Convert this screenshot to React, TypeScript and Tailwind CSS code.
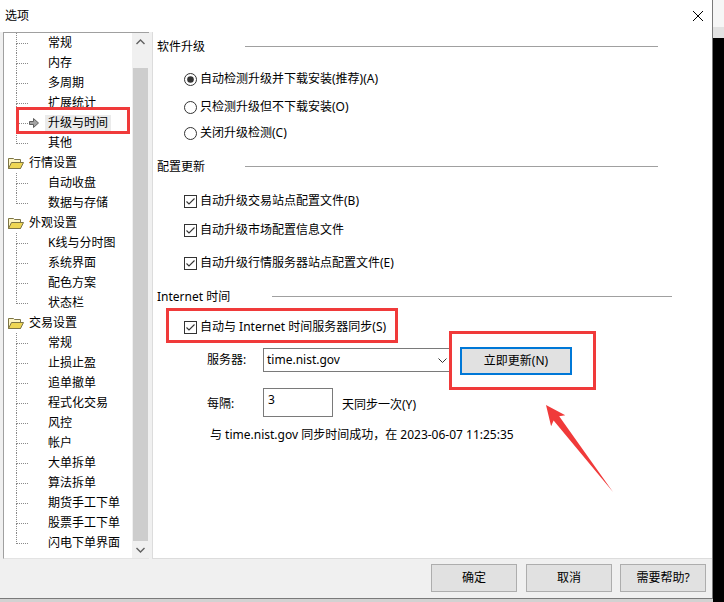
import React from "react";

const LINE = "border-[#8a8a8a]";

function Folder() {
  return (
    <svg width="16" height="13" viewBox="0 0 16 13">
      <path d="M0.5 1.5 L5.5 1.5 L6.5 2.5 L12.5 2.5 L12.5 11.5 L0.5 11.5 Z" fill="#fdf5c4" stroke="#7d7546" />
      <path d="M0.5 11.5 L3.5 5.5 L15.5 5.5 L12.5 11.5 Z" fill="#eed654" stroke="#7d7546" />
    </svg>
  );
}

function SelArrow() {
  return (
    <svg width="10" height="10" viewBox="0 0 10 10">
      <polygon points="0.5,3.5 4.5,3.5 4.5,0.5 9.5,5 4.5,9.5 4.5,6.5 0.5,6.5" fill="#a3a3a3" stroke="#5f5f5f" strokeWidth="1" />
    </svg>
  );
}

type Row =
  | { kind: "parent"; label: string }
  | { kind: "child"; label: string; last?: boolean; selected?: boolean };

const rows: Row[] = [
  { kind: "child", label: "常规" },
  { kind: "child", label: "内存" },
  { kind: "child", label: "多周期" },
  { kind: "child", label: "扩展统计" },
  { kind: "child", label: "升级与时间", selected: true },
  { kind: "child", label: "其他", last: true },
  { kind: "parent", label: "行情设置" },
  { kind: "child", label: "自动收盘" },
  { kind: "child", label: "数据与存储", last: true },
  { kind: "parent", label: "外观设置" },
  { kind: "child", label: "K线与分时图" },
  { kind: "child", label: "系统界面" },
  { kind: "child", label: "配色方案" },
  { kind: "child", label: "状态栏", last: true },
  { kind: "parent", label: "交易设置" },
  { kind: "child", label: "常规" },
  { kind: "child", label: "止损止盈" },
  { kind: "child", label: "追单撤单" },
  { kind: "child", label: "程式化交易" },
  { kind: "child", label: "风控" },
  { kind: "child", label: "帐户" },
  { kind: "child", label: "大单拆单" },
  { kind: "child", label: "算法拆单" },
  { kind: "child", label: "期货手工下单" },
  { kind: "child", label: "股票手工下单" },
  { kind: "child", label: "闪电下单界面", last: true },
];

function TreeRow({ row }: { row: Row }) {
  if (row.kind === "parent") {
    return (
      <div className="flex h-[20px] items-center">
        <div className="ml-[4px] flex w-[16px] items-center">
          <Folder />
        </div>
        <span className="ml-[5px] leading-[16px] whitespace-nowrap">{row.label}</span>
      </div>
    );
  }
  return (
    <div className="flex h-[20px] items-center">
      <div className="ml-[12px] flex h-full w-[12px] flex-col">
        <div className={`h-[11px] border-l border-b border-dotted ${LINE}`} />
        <div className={row.last ? "h-[9px]" : `h-[9px] border-l border-dotted ${LINE}`} />
      </div>
      <div className="flex w-[17px] items-center pl-[1px]">{row.selected ? <SelArrow /> : null}</div>
      <span className={`px-[3px] leading-[16px] whitespace-nowrap ${row.selected ? "bg-[#ebebeb]" : ""}`}>
        {row.label}
      </span>
    </div>
  );
}

function Chevron({ up }: { up?: boolean }) {
  return (
    <svg width="9" height="6" viewBox="0 0 9 6">
      <polyline
        points={up ? "0.5,5 4.5,1 8.5,5" : "0.5,1 4.5,5 8.5,1"}
        fill="none"
        stroke="#606060"
        strokeWidth="1.4"
      />
    </svg>
  );
}

function Header({ label, labelW, lineW, mt }: { label: string; labelW: string; lineW: string; mt: string }) {
  return (
    <div className={`flex h-[20px] items-start pl-[4px] ${mt}`}>
      <span className={`${labelW} h-[20px] flex items-center leading-[16px] whitespace-nowrap`}>{label}</span>
      <div className={`${lineW} mt-[9px] h-px bg-[#a0a0a0]`} />
    </div>
  );
}

function Radio({ checked }: { checked?: boolean }) {
  return (
    <svg width="13" height="13" viewBox="0 0 13 13">
      <circle cx="6.5" cy="6.5" r="6" fill="#fff" stroke="#333" strokeWidth="1" />
      {checked ? <circle cx="6.5" cy="6.5" r="3.3" fill="#333" /> : null}
    </svg>
  );
}

function Check() {
  return (
    <svg width="13" height="13" viewBox="0 0 13 13">
      <rect x="0.5" y="0.5" width="12" height="12" fill="#fff" stroke="#333" strokeWidth="1" />
      <polyline points="2.5,6.5 5,9 10.5,3.5" fill="none" stroke="#333" strokeWidth="1.1" />
    </svg>
  );
}

function OptRow({ mt, children, radio, checked }: { mt: string; children: React.ReactNode; radio?: boolean; checked?: boolean }) {
  return (
    <div className={`flex h-[20px] items-center pl-[31px] ${mt}`}>
      {radio ? <Radio checked={checked} /> : <Check />}
      <span className="ml-[3px] leading-[16px] whitespace-nowrap">{children}</span>
    </div>
  );
}

function DlgButton({ children, className = "" }: { children: React.ReactNode; className?: string }) {
  return (
    <div className={`flex h-[28px] w-[86px] items-center justify-center border border-[#adadad] bg-[#e1e1e1] leading-[16px] ${className}`}>
      {children}
    </div>
  );
}

export default function App() {
  return (
    <div className="relative h-[602px] w-[724px] overflow-hidden bg-black font-['Noto_Sans','Noto_Sans_CJK_SC',sans-serif] text-[12px] text-black">
      <div className="flex h-[599px]">
        {/* window */}
        <div className="flex h-[599px] w-[713px] flex-col border-r border-b border-[#7a7a7a] bg-[#f0f0f0]">
          {/* title bar */}
          <div className="flex h-[32px] items-center justify-between bg-white pl-[5px]">
            <span className="leading-[16px]">选项</span>
            <svg width="10" height="10" viewBox="0 0 10 10" className="mr-[9px]">
              <line x1="0" y1="0" x2="10" y2="10" stroke="#000" strokeWidth="1" />
              <line x1="10" y1="0" x2="0" y2="10" stroke="#000" strokeWidth="1" />
            </svg>
          </div>

          {/* main row */}
          <div className="flex h-[527px] pl-[3px]">
            {/* tree */}
            <div className="flex h-[527px] w-[146px] border-t border-l border-b border-t-[#a0a0a0] border-l-[#a0a0a0] border-b-[#e3e3e3] bg-white">
              <div className="flex w-[128px] flex-col overflow-hidden">
                {rows.map((r, i) => (
                  <TreeRow key={i} row={r} />
                ))}
              </div>
              <div className="flex w-[17px] flex-col bg-[#f0f0f0]">
                <div className="flex h-[17px] items-center justify-center">
                  <Chevron up />
                </div>
                <div className="mx-[1px] mt-[18px] h-[473px] bg-[#cdcdcd]" />
                <div className="flex h-[17px] items-center justify-center">
                  <Chevron />
                </div>
              </div>
            </div>

            {/* right panel */}
            <div className="ml-[3px] flex flex-1 flex-col border-l border-b border-[#dcdcdc] bg-white">
              <Header label="软件升级" labelW="w-[88px]" lineW="w-[413px]" mt="mt-[5px]" />
              <OptRow mt="mt-[12px]" radio checked>
                自动检测升级并下载安装(推荐)(A)
              </OptRow>
              <OptRow mt="mt-[8px]" radio>
                只检测升级但不下载安装(O)
              </OptRow>
              <OptRow mt="mt-[6px]" radio>
                关闭升级检测(C)
              </OptRow>

              <Header label="配置更新" labelW="w-[88px]" lineW="w-[413px]" mt="mt-[14px]" />
              <OptRow mt="mt-[14px]">自动升级交易站点配置文件(B)</OptRow>
              <OptRow mt="mt-[9px]">自动升级市场配置信息文件</OptRow>
              <OptRow mt="mt-[13px]">自动升级行情服务器站点配置文件(E)</OptRow>

              <Header label="Internet 时间" labelW="w-[115px]" lineW="w-[400px]" mt="mt-[14px]" />
              <OptRow mt="mt-[10px]">自动与 Internet 时间服务器同步(S)</OptRow>

              <div className="mt-[10px] flex h-[28px] items-start pl-[54px]">
                <div className="mt-[1px] flex h-[24px] w-[56px] items-center leading-[16px]">服务器:</div>
                <div className="mt-[1px] flex h-[24px] w-[187px] items-center justify-between border border-[#7a7a7a] bg-white pl-[3px] pr-[2px]">
                  <span className="leading-[16px]">time.nist.gov</span>
                  <svg width="9" height="5" viewBox="0 0 9 5">
                    <polyline points="0.5,0.5 4.5,4.5 8.5,0.5" fill="none" stroke="#333" strokeWidth="1" />
                  </svg>
                </div>
                <div className="ml-[10px] flex h-[28px] w-[112px] items-center justify-center border-2 border-[#0078d7] bg-[#e1e1e1] leading-[16px]">
                  立即更新(N)
                </div>
              </div>

              <div className="mt-[13px] flex h-[29px] items-start pl-[54px]">
                <div className="flex h-[29px] w-[56px] items-center pt-[2px] leading-[16px]">每隔:</div>
                <div className="h-[29px] w-[70px] border border-[#7a7a7a] bg-white pl-[4px] pt-[3px] leading-[16px]">3</div>
                <div className="ml-[9px] flex h-[29px] items-center pt-[4px] leading-[16px] whitespace-nowrap">天同步一次(Y)</div>
              </div>

              <div className="mt-[8px] flex h-[20px] items-center pl-[57px]">
                <span className="leading-[16px] whitespace-nowrap">与 time.nist.gov 同步时间成功，在 2023-06-07 11:25:35</span>
              </div>
            </div>
          </div>

          {/* bottom buttons */}
          <div className="flex h-[39px] items-start justify-end pt-[5px] pr-[6px]">
            <DlgButton>确定</DlgButton>
            <DlgButton className="ml-[9px]">取消</DlgButton>
            <DlgButton className="ml-[8px]">需要帮助?</DlgButton>
          </div>
        </div>

        {/* right strip outside window */}
        <div className="flex w-[11px] flex-col">
          <div className="h-[27px] bg-[#f6f6f6]" />
          <div className="h-[11px] bg-[#e2e2e2]" />
          <div className="flex-1 bg-black" />
        </div>
      </div>
      <div className="flex h-[3px]">
        <div className="w-[713px] bg-[#d2d2d2]" />
        <div className="flex-1 bg-black" />
      </div>

      {/* annotations */}
      <div className="pointer-events-none absolute left-[16px] top-[107px] h-[27px] w-[114px] border-[3px] border-[#f03a3a]" />
      <div className="pointer-events-none absolute left-[166px] top-[308px] h-[35px] w-[232px] border-[3px] border-[#f03a3a]" />
      <div className="pointer-events-none absolute left-[449px] top-[331px] h-[59px] w-[147px] border-[3px] border-[#f03a3a]" />
      <svg className="pointer-events-none absolute left-0 top-0" width="724" height="602" viewBox="0 0 724 602">
        <polygon
          points="546,405 565.3,415.3 559.2,416.3 613,492 553.6,420.5 551.1,426.3"
          fill="#f03a3a"
        />
      </svg>
    </div>
  );
}
